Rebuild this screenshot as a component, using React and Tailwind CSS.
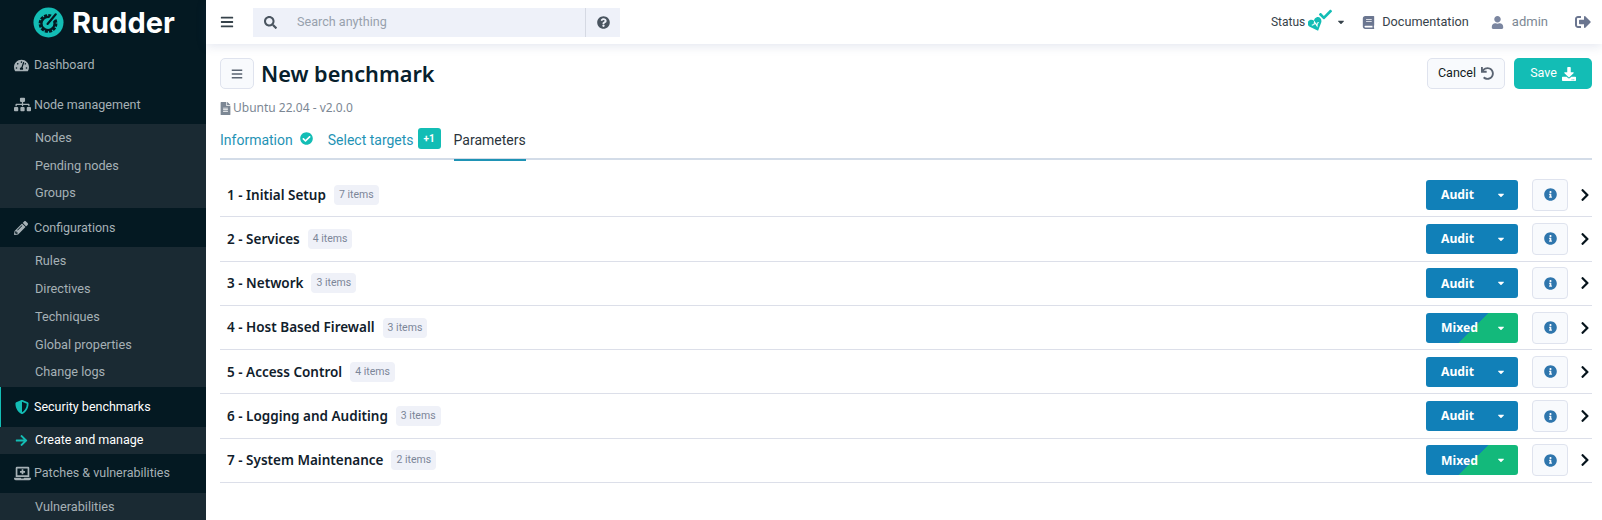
import React from 'react';
import {
  FaArrowRight, FaBars, FaBook, FaCaretDown, FaCheck, FaCheckCircle, FaChevronRight, FaDownload, FaFileAlt,
  FaInfoCircle, FaLaptopMedical, FaPencilAlt, FaQuestionCircle, FaSearch, FaShieldAlt, FaSignOutAlt,
  FaSitemap, FaTachometerAlt, FaUndo, FaUser,
} from 'react-icons/fa';

const sections = [
  { title: '1 - Initial Setup', items: '7 items', mode: 'Audit' },
  { title: '2 - Services', items: '4 items', mode: 'Audit' },
  { title: '3 - Network', items: '3 items', mode: 'Audit' },
  { title: '4 - Host Based Firewall', items: '3 items', mode: 'Mixed' },
  { title: '5 - Access Control', items: '4 items', mode: 'Audit' },
  { title: '6 - Logging and Auditing', items: '3 items', mode: 'Audit' },
  { title: '7 - System Maintenance', items: '2 items', mode: 'Mixed' },
];

const Logo = () => (
  <svg viewBox="0 0 32 32" className="h-[31px] w-[31px]">
    <circle cx="16" cy="16" r="15.5" fill="#13bdb5" />
    <circle cx="15.5" cy="17" r="8.4" fill="none" stroke="#041922" strokeWidth="2.6" strokeDasharray="3.2 1.2" />
    <circle cx="15.5" cy="17" r="6.8" fill="none" stroke="#041922" strokeWidth="2.4" />
    <path d="M15 17.5 L24 7" stroke="#13bdb5" strokeWidth="5.4" />
    <path d="M15 17.5 L23.5 7.5" stroke="#041922" strokeWidth="2.2" strokeLinecap="round" />
  </svg>
);

const StatusHeart = () => (
  <svg viewBox="0 0 24 24" className="absolute left-0 top-[5px] h-[15px] w-[15px]">
    <g transform="rotate(-22 12 12)">
      <path d="M12 23 L2 12 C-1 8 1 2 6.5 2 C9 2 11 3.5 12 5.5 C13 3.5 15 2 17.5 2 C23 2 25 8 22 12 Z" fill="#13bdb5" />
      <path d="M6 11 H10 L12 7.5 L13.5 15 L15.5 11 H18" fill="none" stroke="#ffffff" strokeWidth="1.6" />
    </g>
  </svg>
);

const MenuTitle = ({ icon: Icon, label, active, iconClass }) => (
  <div className={`flex h-[39.6px] shrink-0 items-center pt-[1px] text-[12.5px] ${active ? 'border-l border-[#13bdb5] pl-[13px] text-white' : 'pl-[14px] text-[#a6b1b6]'}`}>
    <span className="flex w-[20px] justify-start">
      <Icon className={iconClass} />
    </span>
    <span>{label}</span>
  </div>
);

const SubItem = ({ label }) => (
  <div className="flex h-[27.9px] items-center pb-[2px] pl-[35px] text-[12.7px] text-[#a6b1b6]">{label}</div>
);

const Sidebar = () => (
  <aside className="flex h-[520px] w-[206px] shrink-0 flex-col overflow-hidden bg-[#041922]">
    <div className="flex h-[45px] shrink-0 items-center gap-[8px] pl-[33px]">
      <Logo />
      <span className="font-['Inter',sans-serif] text-[29px] font-bold leading-none text-white">Rudder</span>
    </div>
    <MenuTitle icon={FaTachometerAlt} label="Dashboard" iconClass="text-[15px] text-[#a6b1b6]" />
    <MenuTitle icon={FaSitemap} label="Node management" iconClass="text-[17px] text-[#a6b1b6]" />
    <div className="bg-[#1a2a33]">
      <SubItem label="Nodes" />
      <SubItem label="Pending nodes" />
      <SubItem label="Groups" />
    </div>
    <MenuTitle icon={FaPencilAlt} label="Configurations" iconClass="text-[14px] text-[#a6b1b6]" />
    <div className="bg-[#1a2a33]">
      <SubItem label="Rules" />
      <SubItem label="Directives" />
      <SubItem label="Techniques" />
      <SubItem label="Global properties" />
      <SubItem label="Change logs" />
    </div>
    <MenuTitle icon={FaShieldAlt} label="Security benchmarks" active iconClass="ml-[1px] text-[14px] text-[#13bdb5]" />
    <div className="flex h-[27px] shrink-0 items-center bg-[#1a2a33] pl-[15px] text-[12.5px] text-white">
      <FaArrowRight className="mr-[7px] text-[13px] text-[#13bdb5]" />
      Create and manage
    </div>
    <MenuTitle icon={FaLaptopMedical} label="Patches & vulnerabilities" iconClass="text-[17px] text-[#a6b1b6]" />
    <div className="bg-[#1a2a33]">
      <SubItem label="Vulnerabilities" />
    </div>
  </aside>
);

const Topbar = () => (
  <header className="relative z-10 flex h-[44px] shrink-0 items-center bg-white pl-[14px] pr-[11px] shadow-[0_2px_10px_rgba(60,80,140,0.14)]">
    <FaBars className="text-[14px] text-[#36424a]" />
    <div className="ml-[19px] flex h-[29px] w-[367px] items-center bg-[#eef1f9]">
      <FaSearch className="ml-[11px] text-[13px] text-[#4a5560]" />
      <span className="ml-[20px] flex-1 text-[12.6px] text-[#98a1ad]">Search anything</span>
      <span className="flex h-full w-[35px] items-center justify-center border-l border-[#d5d9e3]">
        <FaQuestionCircle className="text-[13px] text-[#4a5560]" />
      </span>
    </div>
    <div className="ml-auto flex items-center text-[12.7px]">
      <span className="text-[12px] text-[#36424a]">Status</span>
      <span className="relative ml-[3px] h-[20px] w-[22px]">
        <StatusHeart />
        <FaCheck className="absolute left-[11px] top-[-4px] text-[13px] text-[#13bdb5]" />
      </span>
      <FaCaretDown className="ml-[6px] text-[10px] text-[#36424a]" />
      <FaBook className="ml-[16px] text-[13px] text-[#6b7690]" />
      <span className="ml-[7px] text-[#36424a]">Documentation</span>
      <FaUser className="ml-[22px] text-[13px] text-[#7b86a0]" />
      <span className="ml-[8px] text-[13px] text-[#7c8794]">admin</span>
      <FaSignOutAlt className="ml-[27px] text-[16px] text-[#6b7690]" />
    </div>
  </header>
);

const Row = ({ title, items, mode }) => (
  <div className="flex h-[44.3px] items-center border-b border-[#dcdfe9] pl-[7px]">
    <span className="font-['Noto_Sans',sans-serif] text-[13.5px] font-semibold text-[#10202b]">{title}</span>
    <span className="ml-[8px] rounded-[4px] bg-[#eff1f8] px-[5px] py-[2px] text-[10.5px] leading-[16px] text-[#7c8698]">{items}</span>
    <button
      className={`ml-auto flex h-[30px] w-[92px] items-center rounded-[3px] pl-[15px] font-['Noto_Sans',sans-serif] text-[12.2px] font-bold text-white ${mode === 'Mixed' ? 'bg-[linear-gradient(135deg,#1180b8_51%,#13b97b_51%)]' : 'bg-[#1180b8]'}`}
    >
      <span className="w-[55px] pt-[1px] text-left">{mode}</span>
      <FaCaretDown className="text-[10px]" />
    </button>
    <span className="ml-[14px] flex h-[32px] w-[36px] items-center justify-center rounded-[4px] border border-[#dfe3ee] bg-[#f8fafd]">
      <FaInfoCircle className="text-[13px] text-[#2f76ad]" />
    </span>
    <span className="flex w-[24px] justify-end">
      <FaChevronRight className="text-[14px] text-[#06141c]" />
    </span>
  </div>
);

export default function App() {
  return (
    <div className="flex h-[520px] w-[1602px] overflow-hidden bg-white font-['Roboto',sans-serif]">
      <Sidebar />
      <div className="flex min-w-0 flex-1 flex-col">
        <Topbar />
        <main className="flex-1 pl-[14px] pr-[10px]">
          <div className="mt-[14px] flex items-center">
            <button className="flex h-[31px] w-[34px] items-center justify-center rounded-[5px] border border-[#dfe3ee] bg-[#f8fafd]">
              <FaBars className="text-[12px] text-[#5a6472]" />
            </button>
            <h1 className="ml-[7px] font-['Noto_Sans',sans-serif] text-[21.7px] font-semibold leading-[31px] text-[#07202c]">New benchmark</h1>
            <button className="ml-auto flex h-[31px] w-[78px] items-center justify-center gap-[5px] rounded-[5px] border border-[#dfe3ee] bg-[#f8fafd] text-[12.5px] text-[#111b22]">
              Cancel <FaUndo className="text-[13px] text-[#5a6472]" />
            </button>
            <button className="ml-[9px] flex h-[31px] w-[78px] items-center justify-center gap-[5px] rounded-[5px] bg-[#13bdb5] text-[12.5px] text-white">
              Save <FaDownload className="text-[14px]" />
            </button>
          </div>
          <div className="mt-[9px] flex h-[20px] items-center font-['Noto_Sans',sans-serif] text-[12px] text-[#7c8794]">
            <FaFileAlt className="-ml-[1px] mr-[1px] text-[13px] text-[#7c8794]" />
            Ubuntu 22.04 - v2.0.0
          </div>
          <div className="mt-[4px] flex h-[38px] items-center border-b-2 border-[#d3dce8] text-[14px]">
            <span className="flex h-full items-center text-[#1f93b5]">
              Information
              <FaCheckCircle className="ml-[7px] mt-[-4px] text-[13px] text-[#13bdb5]" />
            </span>
            <span className="ml-[15px] flex h-full items-center text-[#1f93b5]">
              Select targets
              <span className="ml-[4px] mt-[-4px] flex h-[21px] w-[23px] items-center justify-center rounded-[3px] bg-[#13bdb5] text-[10px] font-bold text-white">+1</span>
            </span>
            <span className="mb-[-2px] ml-[13px] flex h-[40px] items-center border-b-2 border-[#1f93b5] text-[#2a343c]">Parameters</span>
          </div>
          <div className="mt-[13px]">
            {sections.map((section) => (
              <Row key={section.title} {...section} />
            ))}
          </div>
        </main>
      </div>
    </div>
  );
}
